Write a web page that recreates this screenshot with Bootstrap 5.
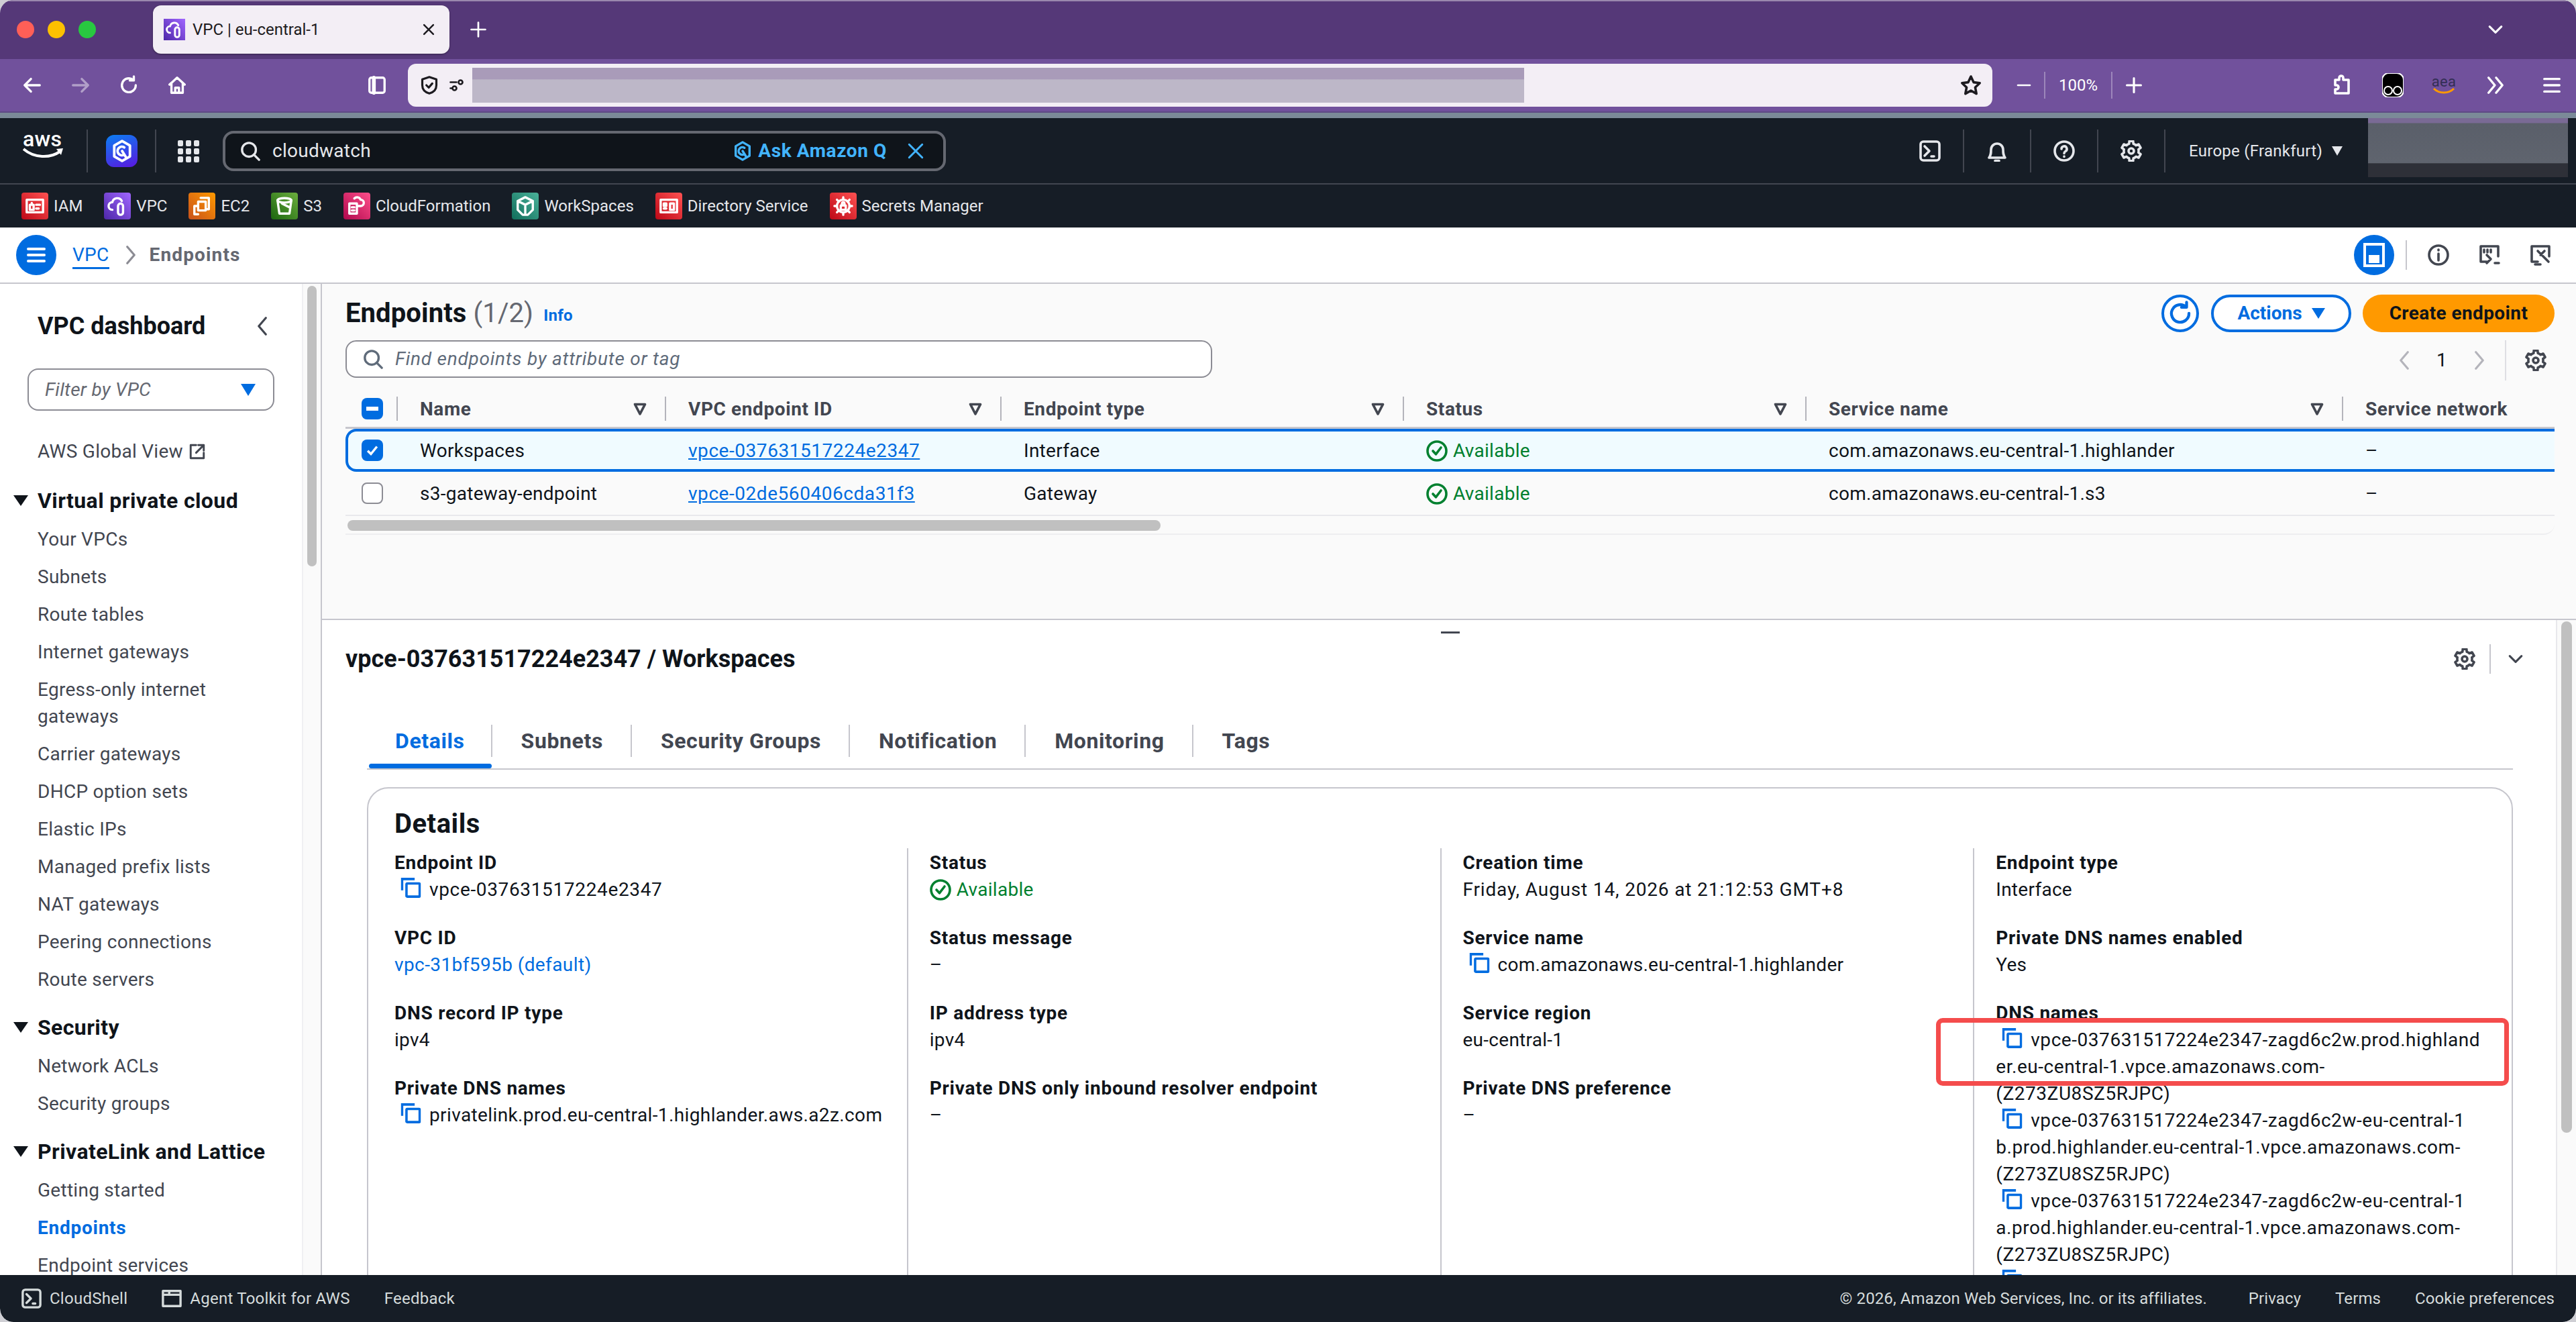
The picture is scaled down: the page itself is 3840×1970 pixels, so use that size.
<!DOCTYPE html>
<html lang="en"><head><meta charset="utf-8"><title>VPC | eu-central-1</title>
<link href="https://cdn.jsdelivr.net/npm/bootstrap@5.3.0/dist/css/bootstrap.min.css" rel="stylesheet">
<style>
html,body{margin:0;height:1970px;background:#cfcfd4;overflow:hidden}
body{font-family:Roboto,"Noto Sans",sans-serif;font-size:28px;line-height:40px;color:#0f141a;letter-spacing:.27px}
svg{flex:none;display:block}
.ic{fill:none;stroke:currentColor;stroke-width:1.8;stroke-linecap:round;stroke-linejoin:round}
.win{width:3840px;height:1970px;display:flex;flex-direction:column;overflow:hidden;border-radius:20px;background:#fff}
/* browser */
.tabbar{height:88px;flex:none;background:#553878;border-top:2px solid #9a88ad;display:flex;align-items:flex-start;color:#fff;padding-right:106px}
.lights{display:flex;gap:20px;padding:29px 0 0 25px;width:228px}
.light{width:26px;height:26px;border-radius:50%}
.l-r{background:#ff5f57}.l-y{background:#fdc000}.l-g{background:#28c840}
.btab{width:442px;height:72px;margin-top:6px;border-radius:12px;background:#f3eef5;color:#1d1b20;display:flex;align-items:center;padding:0 20px 0 16px;font-size:24px;letter-spacing:0;box-shadow:0 1px 3px rgba(0,0,0,.4)}
.btab-title{margin-left:11px;flex:1}
.fav-s{width:32px;height:32px;display:flex;align-items:center;justify-content:center;color:#fff;background:linear-gradient(45deg,#4d27a8,#a166ff)}
.btab-new{margin:30px 0 0 31px}
.tab-chev{margin:28px 0 0 auto}
.toolbar{height:80px;flex:none;background:#71519c;display:flex;align-items:center;color:#fff;border-bottom:2px solid #5e4a85;padding-left:12px}
.tb-btn{width:72px;display:flex;justify-content:center;flex:none}
.tb-w{width:76px}
.tb-last{margin-left:11px}
.tb-off{opacity:.45}
.tb-gap{width:226px;flex:none}
.urlbar{width:2362px;height:64px;border-radius:12px;background:#f3eef5;margin-left:10px;display:flex;align-items:center;color:#1d1b20;padding-left:18px;position:relative}
.urlblur{width:1568px;height:52px;margin-left:10px;background:linear-gradient(#a99bb9 0,#a99bb9 33%,#bdb7c8 34%,#bdb7c8 100%)}
.zoomtxt{font-size:24px;width:102px;text-align:center;border-left:2px solid #9d87bb;border-right:2px solid #9d87bb;height:40px;line-height:40px;letter-spacing:0}
.zoomctl{display:flex;align-items:center;margin-left:35px;width:190px;justify-content:space-between}
.tb-right{margin-left:auto;display:flex;align-items:center;gap:0}
.aea{width:76px;text-align:center;line-height:16px;font-size:22px;color:#332e55}
.strip{height:8px;flex:none;background:#7b8a98}
/* aws header */
.awshead{height:97px;flex:none;background:#161d26;display:flex;align-items:flex-start;color:#e5e7eb}
.awslogo{width:131px;height:64px;margin-top:17px;padding:2px 0 0 34px;border-right:2px solid #424650;color:#fff;line-height:24px;font-size:32px;font-weight:500}
.qcell{width:102px;height:64px;margin-top:17px;border-right:2px solid #424650;padding:8px 0 0 27px}
.qicon{width:47px;height:48px;border-radius:12px;background:linear-gradient(160deg,#0a7ff2,#5a16e0);display:flex;align-items:center;justify-content:center;color:#fff}
.gridcell{width:99px;padding:33px 0 0 32px}
.searchbox{width:1078px;height:60px;margin-top:19px;border:4px solid #656871;border-radius:16px;background:#0f141a;display:flex;align-items:center;padding:0 28px 0 22px}
.searchtxt{margin-left:18px;flex:1}
.askq{color:#42b4ff;font-weight:700;display:flex;align-items:center;gap:8px;letter-spacing:.6px}
.askx{color:#42b4ff;margin-left:30px}
.hcell{width:100px;height:64px;margin-top:17px;border-right:2px solid #424650;display:flex;align-items:center;justify-content:center}
.hright{margin-left:auto;display:flex;align-items:flex-start}
.region{font-size:24px;padding:0 0 0 35px;width:302px;display:flex;gap:14px;align-items:center;height:64px;margin-top:17px}
.acct{width:298px;height:88px;margin-right:12px;background:linear-gradient(#7a6a95 0,#7a6a95 8%,#5a5f6a 9%,#5f646e 76%,#2e3038 77%,#2e3038 100%)}
.favbar{height:66px;flex:none;background:#161d26;border-top:2px solid #424650;display:flex;align-items:center;gap:32px;padding:0 0 0 32px;font-size:24px;color:#e5e7eb;letter-spacing:0}
.fav{display:flex;align-items:center;gap:8px}
.favic{width:40px;height:40px;border-radius:4px;display:flex;align-items:center;justify-content:center;color:#fff}
.f-red{background:linear-gradient(45deg,#bd0816,#ff5252)}
.f-pur{background:linear-gradient(45deg,#4d27a8,#a166ff)}
.f-ora{background:linear-gradient(45deg,#c8511b,#ff9900)}
.f-grn{background:linear-gradient(45deg,#1b660f,#6cae3e)}
.f-pnk{background:linear-gradient(45deg,#b0084d,#ff4f8b)}
.f-tea{background:linear-gradient(45deg,#116d5b,#4ab29a)}
/* console */
.crumbs{height:84px;flex:none;background:#fff;border-bottom:2px solid #c6c6cd;display:flex;align-items:center;padding:0 1px 0 24px}
.menubtn{width:60px;height:60px;border-radius:50%;background:#006ce0;display:flex;align-items:center;justify-content:center;color:#fff}
.crumb-l{color:#006ce0;margin-left:24px;border-bottom:3px solid #006ce0;line-height:36px;margin-top:2px}
.crumb-s{margin:0 18px 0 22px;color:#8c8c94}
.crumb-c{color:#656871;font-weight:700;letter-spacing:1.15px}
.crumb-r{margin-left:auto;display:flex;align-items:center;color:#424650}
.c-blue{width:60px;height:60px;border-radius:50%;background:#006ce0;display:flex;align-items:center;justify-content:center;color:#fff}
.c-sep{width:2px;height:44px;background:#c6c6cd;margin:0 23px 0 17px}
.c-ic{width:48px;margin-right:28px;display:flex;justify-content:center}
.workarea{flex:1;display:flex;min-height:0;position:relative}
.sidenav{width:450px;flex:none;overflow:hidden;background:#fff;color:#424650}
.c-d{color:#424650}
.sn-title{font-size:36px;line-height:44px;font-weight:700;color:#0f141a;display:flex;justify-content:space-between;align-items:center;padding:41px 48px 0 56px;letter-spacing:0}
.sn-filter{margin:41px 41px 0;height:63px;border:2px solid #8c8c94;border-radius:16px;display:flex;align-items:center;justify-content:space-between;padding:0 26px 0 24px;font-style:italic;color:#656871}
.sn-link{padding:8px 0 8px 56px;margin:0}
.sn-ext{margin-top:41px;display:flex;align-items:center;gap:8px;padding-left:56px}
.sn-sec{font-weight:700;font-size:32px;color:#0f141a;display:flex;align-items:center;padding:8px 0 10px 56px;position:relative;letter-spacing:.4px}
.sn-tri{position:absolute;left:20px;top:20px}
.sn-gap{height:15px}
.sn-gap-a{height:25px}
.sn-act{color:#006ce0;font-weight:700;letter-spacing:.75px}
.navtrack{width:30px;flex:none;border-left:2px solid #f0f0f2;border-right:2px solid #c6c6cd;background:#fafafa;padding:3px 6px 0}
.navthumb{height:418px;background:#c0c0c0;border-radius:8px}
.mainp{flex:1;min-width:0;display:flex;flex-direction:column}
.toppanel{height:499px;flex:none;background:#fafafa;padding:16px 32px 0 35px}
.titlerow{height:56px;display:flex;align-items:center}
.h-main{font-size:40px;font-weight:700;margin:0;line-height:44px;letter-spacing:.1px}
.h-cnt{font-weight:400;color:#656871}
.h-info{font-size:24px;font-weight:700;color:#006ce0;margin-left:15px;text-decoration:none;margin-top:6px}
.roundbtn{width:56px;height:56px;border-radius:50%;border:4px solid #006ce0;color:#006ce0;display:flex;align-items:center;justify-content:center;background:#fff;padding:0}
.actbtn{width:209px;height:56px;border-radius:28px;border:4px solid #006ce0;color:#006ce0;font-weight:700;font-size:28px;background:#fff;margin-left:18px;padding:0;display:flex;align-items:center;justify-content:center;gap:14px}
.orbtn{width:286px;height:56px;border-radius:28px;border:0;background:#f90;color:#0f141a;font-weight:700;font-size:28px;margin-left:17px;padding:0;letter-spacing:.4px}
.searchrow{height:60px;margin-top:12px;display:flex;align-items:flex-start;position:relative}
.findbox{width:1292px;height:56px;border:2px solid #8c8c94;border-radius:16px;background:#fff;display:flex;align-items:center;padding:0 0 0 24px;font-style:italic;color:#5f6b7a;letter-spacing:.75px}
.findtxt{margin-left:18px}
.pager{margin-left:auto;display:flex;align-items:center;height:60px;margin-right:12px}
.pg-off{color:#b4b4bb}
.pg-num{margin:0 39px;line-height:40px}
.pg-sep{width:2px;height:60px;background:#dedee3;margin:0 28px 0 29px}
.ep-table{width:3293px;table-layout:fixed;border-collapse:separate;border-spacing:0;margin:24px 0 0;background:transparent}
.cw0{width:78px}.cw1{width:400px}.cw2{width:500px}.cw3{width:600px}.cw4{width:600px}.cw5{width:800px}.cw6{width:315px}
.ep-table th,.ep-table td{padding:0;border:0;background:transparent;box-shadow:none;vertical-align:middle;color:#0f141a;font-weight:400}
.ep-table th{height:48px;border-bottom:3px solid #c6c6cd;vertical-align:top;color:#424650;font-weight:700;letter-spacing:.6px}
.thin{height:36px;border-right:2px solid #b4b4bb;display:flex;justify-content:space-between;align-items:center;padding:2px 26px 0 33px;line-height:36px;margin-top:0}
.thin-last{border-right:0}
.thin-chk{padding:0 0 0 24px;justify-content:flex-start}
.ep-table td{height:64px;padding:2px 0 0 33px}
.ep-table td.tc-chk{padding:0 0 0 24px}
.ep-table .rsel td{background:#f0fbff;border-top:4px solid #006ce0;border-bottom:4px solid #006ce0;height:64px}
.ep-table .rsel td.tc-chk{border-left:4px solid #006ce0;border-radius:16px 0 0 16px;padding-left:20px}
.ep-table .rlast td{border-bottom:2px solid #e8e8ec;height:66px}
.chk{width:32px;height:32px;border-radius:8px;display:flex;align-items:center;justify-content:center}
.chk-on{background:#006ce0;color:#fff}
.chk-off{border:2px solid #8c8c94;background:#fff}
.ep-link{color:#006ce0;text-decoration:underline;letter-spacing:.55px}
.stat{display:flex;align-items:center;gap:8px;color:#00802f}
.hscroll{height:28px;border-bottom:2px solid #eeeef0;border-radius:0 0 16px 0;padding:6px 0 0 3px}
.hthumb{width:1212px;height:16px;background:#c0c0c0;border-radius:8px}
.splitter{height:2px;flex:none;background:#c6c6cd}
.detailwrap{flex:1;min-height:0;display:flex;position:relative}
.grip{position:absolute;left:1668px;top:17px;width:28px;height:3px;background:#424650}
.detail{flex:1;min-width:0;overflow:hidden;background:#fff;padding:38px 0 0 35px}
.dhead{display:flex;align-items:center;justify-content:space-between;padding-right:46px;height:40px}
.dh-t{font-size:36px;font-weight:700;margin:0;line-height:40px;letter-spacing:0}
.dh-r{display:flex;align-items:center;color:#424650}
.dh-sep{width:2px;height:44px;background:#c6c6cd;margin:0 23px 0 21px}
.tabsnav{margin:78px 64px 0 32px;height:67px;border-bottom:2px solid #c6c6cd;display:flex;font-weight:700;font-size:32px;color:#424650;letter-spacing:.6px}
.tabit{padding:0;display:flex;flex-direction:column}
.tablab{height:48px;padding:0 41px 0 43px;border-right:2px solid #c6c6cd;line-height:48px}
.tablast{border-right:0}
.tabfirst .tablab{padding:0 39px 0 42px;color:#006ce0}
.tabbar-a{height:8px;margin-top:10px;background:#006ce0;border-radius:4px;margin-left:3px;margin-right:1px}
.dcard{margin:26px 64px 0 32px;border:2px solid #c6c6cd;border-radius:32px;height:900px;position:relative;padding:31px 8px 0}
.dcard-h{font-size:40px;font-weight:700;line-height:44px;margin:0 0 14px 31px;letter-spacing:.5px}
.dcol{padding:2px 0 0 32px;height:700px;border-left:2px solid #c6c6cd}
.dcol-f{border-left:0;padding-left:31px}
.lbl{font-weight:700;color:#0f141a;letter-spacing:.75px}
.val{margin-bottom:32px;color:#0f141a;display:flex;align-items:center;gap:8px}
.val-t{margin-bottom:32px}
.val-l{color:#006ce0;letter-spacing:.4px}
.mono-w{letter-spacing:.65px}
.priv{letter-spacing:.38px}
.when{letter-spacing:.84px}
.dns{letter-spacing:.55px}
.cpi{display:inline-block;vertical-align:-3px;margin:0 11px 0 8px;color:#006ce0;fill:none;stroke:currentColor;stroke-width:1.9}
.val.stg{color:#00802f}
.redbox{position:absolute;left:2337px;top:342px;width:854px;height:101px;border:7px solid #f44c4c;border-radius:10px}
.dtrack{width:30px;flex:none;border-left:2px solid #e8e8ec;background:#fafafa;padding:2px 6px 0 6px}
.dthumb{height:762px;background:#c0c0c0;border-radius:8px}
.foot{height:70px;flex:none;background:#161d26;border-radius:0 0 20px 20px;display:flex;align-items:center;padding:0 32px;font-size:24px;color:#d5dbdb;letter-spacing:.25px}
.fitem{display:flex;align-items:center;gap:12px;margin-right:51px}
.fright{margin-left:auto;display:flex;gap:51px;letter-spacing:.1px}
.fcopy{margin-right:11px}
</style></head><body>
<svg class="d-none" xmlns="http://www.w3.org/2000/svg">
<symbol id="i-gear" viewBox="0 0 16 16"><path d="M13.5 8c0-.4 0-.8-.1-1.2l1.6-1.2-1.5-2.6-1.9.8a5.5 5.5 0 0 0-2-1.2L9.4.6H6.6l-.2 2a5.5 5.5 0 0 0-2 1.2l-1.9-.8L1 5.6l1.6 1.2a5.5 5.5 0 0 0 0 2.4L1 10.4l1.5 2.6 1.9-.8a5.5 5.5 0 0 0 2 1.2l.2 2h2.8l.2-2a5.5 5.5 0 0 0 2-1.2l1.9.8 1.5-2.6-1.6-1.2c.1-.4.1-.8.1-1.2Z"/><circle cx="8" cy="8" r="2"/></symbol>
<symbol id="i-search" viewBox="0 0 16 16"><circle cx="7" cy="7" r="5.5"/><path d="M11 11l4 4"/></symbol>
<symbol id="i-copy" viewBox="0 0 16 16"><path d="M1 10V1h10"/><rect x="4.5" y="4.5" width="10.5" height="10.5" rx=".5"/></symbol>
<symbol id="i-ok" viewBox="0 0 16 16"><circle cx="8" cy="8" r="7"/><path d="M5 8l2.2 2.4L11 5.5"/></symbol>
<symbol id="i-filter" viewBox="0 0 16 16"><path d="M2.5 2.5h11L8 13z" stroke-width="2.6"/></symbol>
<symbol id="i-term" viewBox="0 0 16 16"><rect x="1" y="1" width="14" height="14" rx="2"/><path d="M4 4.5l3.5 3.5L4 11.5M9 12h2"/></symbol>
<symbol id="i-q" viewBox="0 0 16 16"><path d="M8 1l5.5 3.2v7.6L8 15l-5.500-3.200V4.200z"/><path d="M9.500 5.500A3 3 0 1 0 9.500 10.500M8 8l2.500 4"/></symbol>
</svg>
<div class="win">
<div class="tabbar">
 <div class="lights"><div class="light l-r"></div><div class="light l-y"></div><div class="light l-g"></div></div>
 <div class="btab"><div class="fav-s"><svg width="26" height="26" viewBox="0 0 16 16" class="ic"><path d="M4 11a3 3 0 0 1 0-6 4 4 0 0 1 7.500-1M8.500 8a2 2 0 0 1 4 0v5a2 2 0 0 1-4 0z"/></svg></div><span class="btab-title">VPC | eu-central-1</span><svg width="22" height="22" viewBox="0 0 16 16" class="ic"><path d="M3 3l10 10M13 3L3 13"/></svg></div>
 <svg class="ic btab-new" width="24" height="24" viewBox="0 0 16 16"><path d="M8 1v14M1 8h14"/></svg>
 <svg class="ic tab-chev" width="28" height="28" viewBox="0 0 16 16"><path d="M3 5.500l5 5 5-5"/></svg>
</div>
<div class="toolbar">
 <div class="tb-btn"><svg class="ic" width="30" height="30" viewBox="0 0 16 16"><path d="M14 8H2M7 3L2 8l5 5"/></svg></div>
 <div class="tb-btn tb-off"><svg class="ic" width="30" height="30" viewBox="0 0 16 16"><path d="M2 8h12M9 3l5 5-5 5"/></svg></div>
 <div class="tb-btn"><svg class="ic" width="30" height="30" viewBox="0 0 16 16"><path d="M13.500 8A5.500 5.500 0 1 1 11.500 3.800M12 1v3.200H8.800"/></svg></div>
 <div class="tb-btn"><svg class="ic" width="30" height="30" viewBox="0 0 16 16"><path d="M2 7.500L8 2l6 5.500M3.500 6.500V14h9V6.500M6.500 14v-4h3v4"/></svg></div>
 <div class="tb-gap"></div>
 <div class="tb-btn"><svg class="ic" width="30" height="30" viewBox="0 0 16 16"><rect x="2" y="2" width="12" height="12" rx="1.500"/><path d="M5.500 2v12" stroke-width="3"/></svg></div>
 <div class="urlbar">
  <svg class="ic" width="28" height="32" viewBox="0 0 16 16"><path d="M8 1l6 2v5c0 3.500-2.500 6-6 7-3.500-1-6-3.500-6-7V3z"/><path d="M5.500 8l2 2 3-3.500"/></svg>
  <svg class="ic ms-3" width="24" height="24" viewBox="0 0 16 16"><path d="M1 5h6M1 11h2"/><circle cx="11" cy="5" r="2"/><circle cx="5" cy="11" r="2"/></svg>
  <div class="urlblur"></div>
  <svg class="ic ms-auto me-3" width="32" height="32" viewBox="0 0 16 16"><path d="M8 1.500l2 4.300 4.600.6-3.400 3.200.9 4.700L8 12l-4.100 2.300.9-4.700L1.400 6.400 6 5.800z"/></svg>
 </div>
 <div class="zoomctl"><svg class="ic" width="24" height="24" viewBox="0 0 16 16"><path d="M2 8h12"/></svg><div class="zoomtxt">100%</div><svg class="ic" width="28" height="28" viewBox="0 0 16 16"><path d="M8 2v12M2 8h12"/></svg></div>
 <div class="tb-right">
  <div class="tb-btn tb-w"><svg class="ic" width="32" height="32" viewBox="0 0 16 16"><path d="M3 4h3V2.500a1.500 1.500 0 0 1 3 0V4h4v10H3v-3h1a1.500 1.500 0 0 0 0-3H3z"/></svg></div>
  <div class="tb-btn tb-w"><svg width="32" height="36" viewBox="0 0 16 18"><rect width="16" height="18" rx="5" fill="#000" stroke="#fff"/><circle cx="4.500" cy="13" r="3" fill="none" stroke="#fff"/><circle cx="11.500" cy="13" r="3" fill="none" stroke="#fff"/></svg></div>
  <div class="aea">aea<svg class="mx-auto" width="34" height="10" viewBox="0 0 34 10"><path d="M2 2c8 8 22 8 30 0" fill="none" stroke="#f90" stroke-width="3"/></svg></div>
  <div class="tb-btn tb-w"><svg class="ic" width="30" height="30" viewBox="0 0 16 16"><path d="M3 2l5 6-5 6M9 2l5 6-5 6"/></svg></div>
  <div class="tb-btn tb-last"><svg class="ic" width="30" height="30" viewBox="0 0 16 16"><path d="M2 3h12M2 8h12M2 13h12"/></svg></div>
 </div>
</div>
<div class="strip"></div>
<div class="awshead">
 <div class="awslogo">aws<svg width="62" height="18" viewBox="0 0 62 18"><path d="M1 3c16 14 40 14 54 4" fill="none" stroke="#fff" stroke-width="4"/><path d="M50 3l10-1-3 10z" fill="#fff"/></svg></div>
 <div class="qcell"><div class="qicon"><svg class="ic" width="34" height="34" viewBox="0 0 16 16"><use href="#i-q"/></svg></div></div>
 <div class="gridcell"><svg width="33" height="33" viewBox="0 0 33 33" fill="#e5e7eb"><rect width="8" height="9" rx="2"/><rect x="12" width="8" height="9" rx="2"/><rect x="24" width="8" height="9" rx="2"/><rect y="12" width="8" height="9" rx="2"/><rect x="12" y="12" width="8" height="9" rx="2"/><rect x="24" y="12" width="8" height="9" rx="2"/><rect y="24" width="8" height="9" rx="2"/><rect x="12" y="24" width="8" height="9" rx="2"/><rect x="24" y="24" width="8" height="9" rx="2"/></svg></div>
 <div class="searchbox"><svg class="ic" width="30" height="30" viewBox="0 0 16 16"><use href="#i-search"/></svg><span class="searchtxt">cloudwatch</span><span class="askq"><svg class="ic" width="30" height="32" viewBox="0 0 16 16"><use href="#i-q"/></svg>Ask Amazon Q</span><svg class="ic askx" width="26" height="26" viewBox="0 0 16 16"><path d="M2 2l12 12M14 2L2 14"/></svg></div>
 <div class="hright">
  <div class="hcell"><svg class="ic" width="32" height="32" viewBox="0 0 16 16"><use href="#i-term"/></svg></div>
  <div class="hcell"><svg class="ic" width="32" height="32" viewBox="0 0 16 16"><path d="M2 13h12c-1.500-2-1.500-3.500-1.500-6a4.500 4.500 0 0 0-9 0c0 2.500 0 4-1.500 6zM6.500 15.300h3"/></svg></div>
  <div class="hcell"><svg class="ic" width="32" height="32" viewBox="0 0 16 16"><circle cx="8" cy="8" r="7"/><path d="M6 6.500a2 2 0 1 1 3 1.700c-.7.500-1 .8-1 1.500M8 12v.2"/></svg></div>
  <div class="hcell"><svg class="ic" width="32" height="32" viewBox="0 0 16 16"><use href="#i-gear"/></svg></div>
  <div class="region"><span>Europe (Frankfurt)</span><svg width="16" height="14" viewBox="0 0 16 14"><path d="M0 0h16L8 14z" fill="#e5e7eb"/></svg></div>
  <div class="acct"></div>
 </div>
</div>
<div class="favbar">
 <div class="fav"><div class="favic f-red"><svg class="ic" width="30" height="30" viewBox="0 0 16 16"><rect x="1.500" y="3" width="13" height="10"/><path d="M4 7h3v4H4zM5.500 7V5.500M9 7h3M9 10h2"/></svg></div>IAM</div>
 <div class="fav"><div class="favic f-pur"><svg class="ic" width="30" height="30" viewBox="0 0 16 16"><path d="M4 11a3 3 0 0 1 0-6 4 4 0 0 1 7.500-1M8.500 8a2 2 0 0 1 4 0v5a2 2 0 0 1-4 0z"/></svg></div>VPC</div>
 <div class="fav"><div class="favic f-ora"><svg class="ic" width="30" height="30" viewBox="0 0 16 16"><rect x="5" y="4.500" width="6" height="7"/><path d="M7 1.500h6.500v9H11M5 14.500H2V8h3"/></svg></div>EC2</div>
 <div class="fav"><div class="favic f-grn"><svg class="ic" width="30" height="30" viewBox="0 0 16 16"><ellipse cx="8" cy="3.500" rx="5.500" ry="1.800"/><path d="M2.500 3.500L4 14h8l1.500-10.500M6 6l6 3"/></svg></div>S3</div>
 <div class="fav"><div class="favic f-pnk"><svg class="ic" width="30" height="30" viewBox="0 0 16 16"><path d="M2 6h6v8H2zM4 9h2M4 11.500h2M8 8h3a2.500 2.500 0 0 0 0-5 3 3 0 0 0-5-1"/></svg></div>CloudFormation</div>
 <div class="fav"><div class="favic f-tea"><svg class="ic" width="30" height="30" viewBox="0 0 16 16"><path d="M8 1l6 3v7l-4 4H6l-4-4V4zM2 4l6 3 6-3M8 7v8"/></svg></div>WorkSpaces</div>
 <div class="fav"><div class="favic f-red"><svg class="ic" width="30" height="30" viewBox="0 0 16 16"><rect x="1.500" y="3" width="13" height="10"/><path d="M4 6h2v2H4zM4 10h2M9 6h3v5H9z"/></svg></div>Directory Service</div>
 <div class="fav"><div class="favic f-red"><svg class="ic" width="30" height="30" viewBox="0 0 16 16"><circle cx="8" cy="8" r="5"/><rect x="6" y="7.500" width="4" height="3.500"/><path d="M7 7.500V6a1 1 0 0 1 2 0v1.500M8 1v2M8 13v2M1 8h2M13 8h2M3 3l1.500 1.500M13 3l-1.500 1.500M3 13l1.500-1.500M13 13l-1.500-1.500"/></svg></div>Secrets Manager</div>
</div>
<div class="crumbs">
 <div class="menubtn"><svg class="ic" width="32" height="32" viewBox="0 0 16 16"><path d="M2 3.500h12M2 8h12M2 12.500h12" stroke-width="2"/></svg></div>
 <span class="crumb-l">VPC</span>
 <svg class="crumb-s ic" width="20" height="28" viewBox="0 0 10 16"><path d="M2 1l6 7-6 7"/></svg>
 <span class="crumb-c">Endpoints</span>
 <div class="crumb-r">
  <div class="c-blue"><svg width="32" height="36" viewBox="0 0 16 18"><rect x="1" y="1" width="14" height="16" fill="none" stroke="#fff" stroke-width="2"/><rect x="4" y="9" width="8" height="6" fill="#fff"/></svg></div>
  <div class="c-sep"></div>
  <div class="c-ic"><svg class="ic" width="32" height="32" viewBox="0 0 16 16"><circle cx="8" cy="8" r="7"/><path d="M8 7v5M8 4v.5"/></svg></div>
  <div class="c-ic"><svg class="ic" width="34" height="32" viewBox="0 0 16 16"><path d="M6 13H1.500V1.500h13V9M4 4v2M6.500 4v2M9 4v2M6 8l3 3-3 3M12 14h3"/></svg></div>
  <div class="c-ic"><svg class="ic" width="34" height="32" viewBox="0 0 16 16"><path d="M6 13H1.500V1.500h13V9M4 15h4M6 5l3 3 5 5M8 8l3-3"/></svg></div>
 </div>
</div>
<div class="workarea">
 <nav class="sidenav">
  <div class="sn-title">VPC dashboard<svg class="ic c-d" width="22" height="28" viewBox="0 0 10 16"><path d="M8 1L2 8l6 7"/></svg></div>
  <div class="sn-filter">Filter by VPC<svg width="22" height="18" viewBox="0 0 22 18"><path d="M0 0h22L11 18z" fill="#006ce0"/></svg></div>
  <div class="sn-ext">AWS Global View<svg class="ic" width="26" height="26" viewBox="0 0 16 16"><path d="M7 2H2v12h12V9M9 2h5v5M14 2L7 9"/></svg></div>
  <div class="sn-gap-a"></div>
  <div class="sn-sec"><svg class="sn-tri" width="22" height="16" viewBox="0 0 22 16"><path d="M0 0h22L11 16z" fill="#0f141a"/></svg>Virtual private cloud</div>
  <div class="sn-link">Your VPCs</div><div class="sn-link">Subnets</div><div class="sn-link">Route tables</div><div class="sn-link">Internet gateways</div><div class="sn-link">Egress-only internet<br>gateways</div><div class="sn-link">Carrier gateways</div><div class="sn-link">DHCP option sets</div><div class="sn-link">Elastic IPs</div><div class="sn-link">Managed prefix lists</div><div class="sn-link">NAT gateways</div><div class="sn-link">Peering connections</div><div class="sn-link">Route servers</div>
  <div class="sn-gap"></div>
  <div class="sn-sec"><svg class="sn-tri" width="22" height="16" viewBox="0 0 22 16"><path d="M0 0h22L11 16z" fill="#0f141a"/></svg>Security</div>
  <div class="sn-link">Network ACLs</div><div class="sn-link">Security groups</div>
  <div class="sn-gap"></div>
  <div class="sn-sec"><svg class="sn-tri" width="22" height="16" viewBox="0 0 22 16"><path d="M0 0h22L11 16z" fill="#0f141a"/></svg>PrivateLink and Lattice</div>
  <div class="sn-link">Getting started</div><div class="sn-link sn-act">Endpoints</div><div class="sn-link">Endpoint services</div>
 </nav>
 <div class="navtrack"><div class="navthumb"></div></div>
 <main class="mainp">
  <section class="toppanel">
   <div class="titlerow">
    <h1 class="h-main">Endpoints <span class="h-cnt">(1/2)</span></h1><a class="h-info">Info</a>
    <button class="roundbtn ms-auto"><svg class="ic" width="38" height="38" viewBox="0 0 16 16"><path d="M13.500 8A5.500 5.500 0 1 1 11.500 3.800M12 1v3.200H8.800"/></svg></button>
    <button class="actbtn">Actions<svg width="20" height="16" viewBox="0 0 20 16"><path d="M0 0h20L10 16z" fill="#006ce0"/></svg></button>
    <button class="orbtn">Create endpoint</button>
   </div>
   <div class="searchrow">
    <div class="findbox"><svg class="ic" width="30" height="30" viewBox="0 0 16 16"><use href="#i-search"/></svg><span class="findtxt">Find endpoints by attribute or tag</span></div>
    <div class="pager"><svg class="ic pg-off" width="18" height="28" viewBox="0 0 10 16"><path d="M8 1L2 8l6 7"/></svg><span class="pg-num">1</span><svg class="ic pg-off" width="18" height="28" viewBox="0 0 10 16"><path d="M2 1l6 7-6 7"/></svg><div class="pg-sep"></div><svg class="ic c-d" width="32" height="32" viewBox="0 0 16 16"><use href="#i-gear"/></svg></div>
   </div>
   <table class="table ep-table">
    <colgroup><col class="cw0"><col class="cw1"><col class="cw2"><col class="cw3"><col class="cw4"><col class="cw5"><col class="cw6"></colgroup>
    <thead><tr>
     <th><div class="thin thin-chk"><div class="chk chk-on"><svg width="18" height="6" viewBox="0 0 18 6"><rect width="18" height="6" fill="#fff"/></svg></div></div></th>
     <th><div class="thin">Name<svg class="ic" width="22" height="22" viewBox="0 0 16 16"><use href="#i-filter"/></svg></div></th>
     <th><div class="thin">VPC endpoint ID<svg class="ic" width="22" height="22" viewBox="0 0 16 16"><use href="#i-filter"/></svg></div></th>
     <th><div class="thin">Endpoint type<svg class="ic" width="22" height="22" viewBox="0 0 16 16"><use href="#i-filter"/></svg></div></th>
     <th><div class="thin">Status<svg class="ic" width="22" height="22" viewBox="0 0 16 16"><use href="#i-filter"/></svg></div></th>
     <th><div class="thin">Service name<svg class="ic" width="22" height="22" viewBox="0 0 16 16"><use href="#i-filter"/></svg></div></th>
     <th><div class="thin thin-last">Service network</div></th>
    </tr></thead>
    <tbody>
     <tr class="rsel"><td class="tc-chk"><div class="chk chk-on"><svg width="22" height="22" viewBox="0 0 16 16" fill="none" stroke="#fff" stroke-width="2.500"><path d="M3 8.500l3.500 3.500L13 4"/></svg></div></td><td>Workspaces</td><td><a class="ep-link">vpce-037631517224e2347</a></td><td>Interface</td><td><span class="stat"><svg class="ic" width="32" height="32" viewBox="0 0 16 16"><use href="#i-ok"/></svg>Available</span></td><td>com.amazonaws.eu-central-1.highlander</td><td>–</td></tr>
     <tr class="rlast"><td class="tc-chk"><div class="chk chk-off"></div></td><td>s3-gateway-endpoint</td><td><a class="ep-link">vpce-02de560406cda31f3</a></td><td>Gateway</td><td><span class="stat"><svg class="ic" width="32" height="32" viewBox="0 0 16 16"><use href="#i-ok"/></svg>Available</span></td><td>com.amazonaws.eu-central-1.s3</td><td>–</td></tr>
    </tbody>
   </table>
   <div class="hscroll"><div class="hthumb"></div></div>
  </section>
  <div class="splitter"></div>
  <div class="detailwrap">
   <div class="grip"></div>
   <section class="detail">
    <div class="dhead"><h2 class="dh-t">vpce-037631517224e2347 / Workspaces</h2><div class="dh-r"><svg class="ic" width="32" height="32" viewBox="0 0 16 16"><use href="#i-gear"/></svg><div class="dh-sep"></div><svg class="ic" width="28" height="28" viewBox="0 0 16 16"><path d="M3 5.500l5 5 5-5"/></svg></div></div>
    <div class="tabsnav">
     <div class="tabit tabfirst"><div class="tablab">Details</div><div class="tabbar-a"></div></div>
     <div class="tabit"><div class="tablab">Subnets</div></div>
     <div class="tabit"><div class="tablab">Security Groups</div></div>
     <div class="tabit"><div class="tablab">Notification</div></div>
     <div class="tabit"><div class="tablab">Monitoring</div></div>
     <div class="tabit"><div class="tablab tablast">Tags</div></div>
    </div>
    <div class="dcard">
     <h3 class="dcard-h">Details</h3>
     <div class="row g-0">
      <div class="col-3 dcol dcol-f">
       <div class="lbl">Endpoint ID</div><div class="val-t mono-w"><svg class="cpi" width="33" height="30" viewBox="0 0 16 16"><use href="#i-copy"/></svg>vpce-037631517224e2347</div>
       <div class="lbl">VPC ID</div><div class="val-t val-l">vpc-31bf595b (default)</div>
       <div class="lbl">DNS record IP type</div><div class="val-t">ipv4</div>
       <div class="lbl">Private DNS names</div><div class="val-t priv"><svg class="cpi" width="33" height="30" viewBox="0 0 16 16"><use href="#i-copy"/></svg>privatelink.prod.eu-central-1.highlander.aws.a2z.com</div>
      </div>
      <div class="col-3 dcol">
       <div class="lbl">Status</div><div class="val stg"><svg class="ic" width="32" height="32" viewBox="0 0 16 16"><use href="#i-ok"/></svg>Available</div>
       <div class="lbl">Status message</div><div class="val-t">–</div>
       <div class="lbl">IP address type</div><div class="val-t">ipv4</div>
       <div class="lbl">Private DNS only inbound resolver endpoint</div><div class="val-t">–</div>
      </div>
      <div class="col-3 dcol">
       <div class="lbl">Creation time</div><div class="val-t when">Friday, August 14, 2026 at 21:12:53 GMT+8</div>
       <div class="lbl">Service name</div><div class="val-t"><svg class="cpi" width="33" height="30" viewBox="0 0 16 16"><use href="#i-copy"/></svg>com.amazonaws.eu-central-1.highlander</div>
       <div class="lbl">Service region</div><div class="val-t">eu-central-1</div>
       <div class="lbl">Private DNS preference</div><div class="val-t">–</div>
      </div>
      <div class="col-3 dcol">
       <div class="lbl">Endpoint type</div><div class="val-t">Interface</div>
       <div class="lbl">Private DNS names enabled</div><div class="val-t">Yes</div>
       <div class="lbl">DNS names</div>
       <div class="dns"><svg class="cpi" width="33" height="30" viewBox="0 0 16 16"><use href="#i-copy"/></svg>vpce-037631517224e2347-zagd6c2w.prod.highland<br>er.eu-central-1.vpce.amazonaws.com-<br>(Z273ZU8SZ5RJPC)</div>
       <div class="dns"><svg class="cpi" width="33" height="30" viewBox="0 0 16 16"><use href="#i-copy"/></svg>vpce-037631517224e2347-zagd6c2w-eu-central-1<br>b.prod.highlander.eu-central-1.vpce.amazonaws.com-<br>(Z273ZU8SZ5RJPC)</div>
       <div class="dns"><svg class="cpi" width="33" height="30" viewBox="0 0 16 16"><use href="#i-copy"/></svg>vpce-037631517224e2347-zagd6c2w-eu-central-1<br>a.prod.highlander.eu-central-1.vpce.amazonaws.com-<br>(Z273ZU8SZ5RJPC)</div>
       <div class="dns"><svg class="cpi" width="33" height="30" viewBox="0 0 16 16"><use href="#i-copy"/></svg></div>
      </div>
     </div>
     <div class="redbox"></div>
    </div>
   </section>
   <div class="dtrack"><div class="dthumb"></div></div>
  </div>
 </main>
</div>
<footer class="foot">
 <div class="fitem"><svg class="ic" width="30" height="30" viewBox="0 0 16 16"><use href="#i-term"/></svg>CloudShell</div>
 <div class="fitem"><svg class="ic" width="30" height="30" viewBox="0 0 16 16"><path d="M1 2h14v12H1zM1 5h14M6 2v3"/></svg>Agent Toolkit for AWS</div>
 <div>Feedback</div>
 <div class="fright"><span class="fcopy">© 2026, Amazon Web Services, Inc. or its affiliates.</span><span>Privacy</span><span>Terms</span><span>Cookie preferences</span></div>
</footer>
</div>
</body></html>
